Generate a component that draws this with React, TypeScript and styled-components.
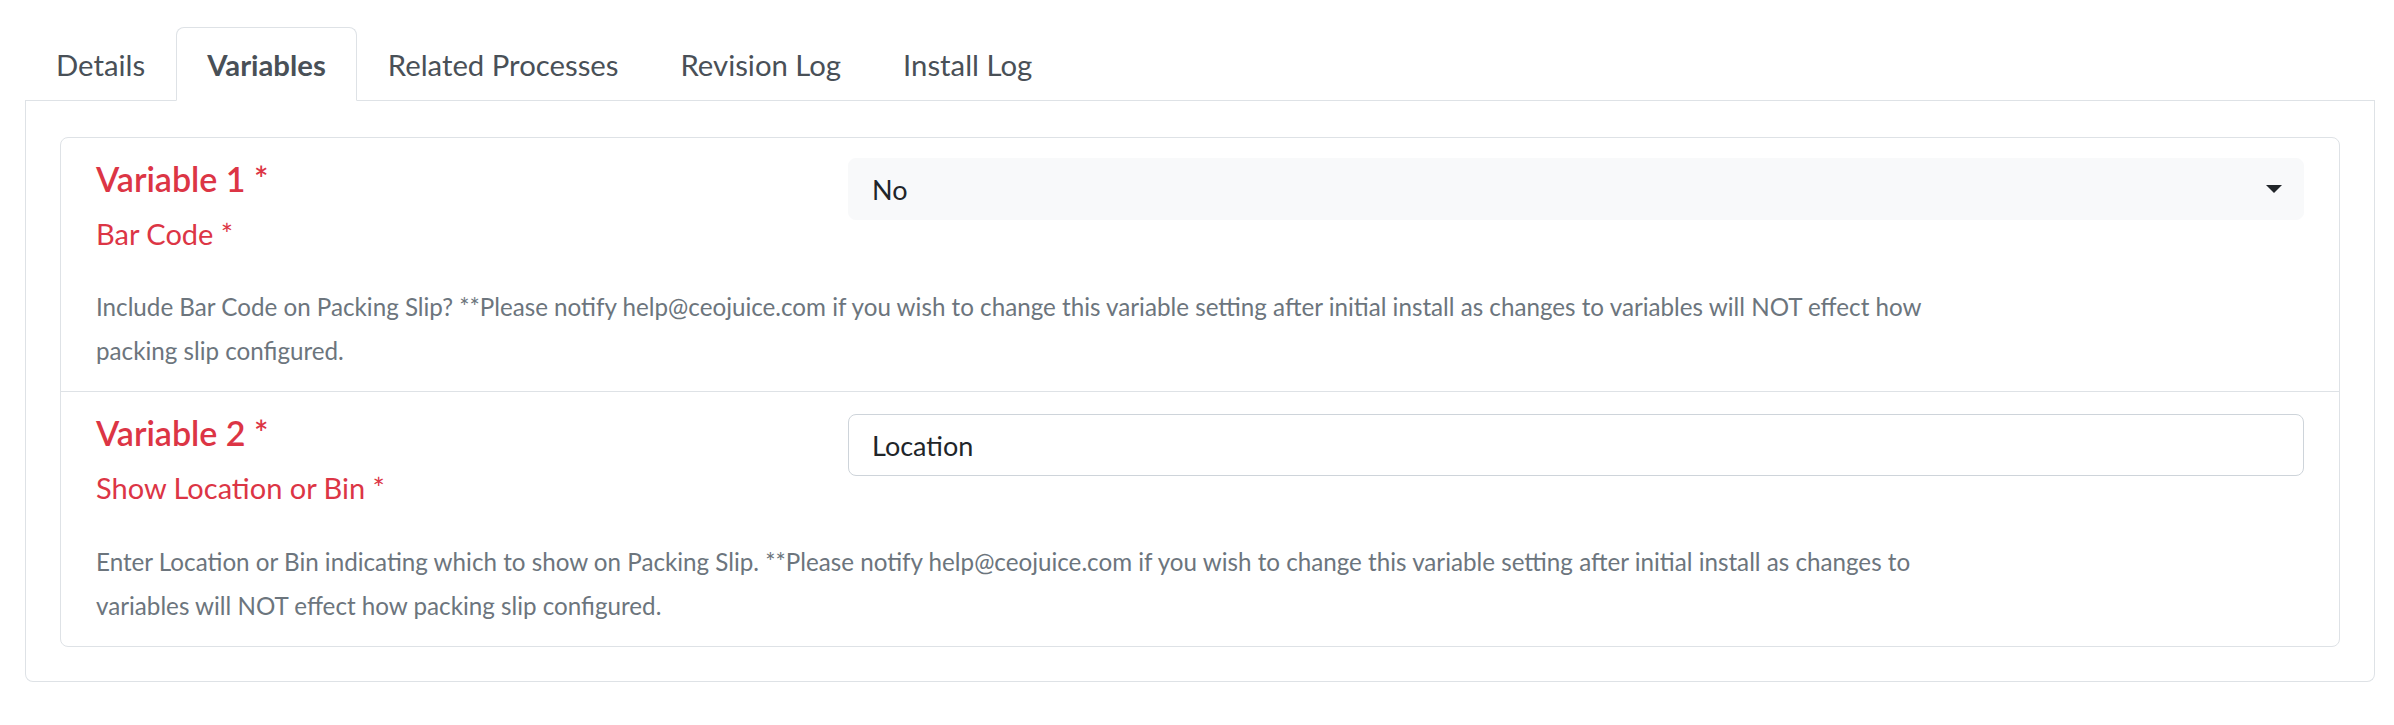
import React from 'react'
import styled, { createGlobalStyle } from 'styled-components'

const tabs = ['Details', 'Variables', 'Related Processes', 'Revision Log', 'Install Log']

const variables = [
  {
    title: 'Variable 1 *',
    label: 'Bar Code *',
    kind: 'select',
    value: 'No',
    help: 'Include Bar Code on Packing Slip? **Please notify help@ceojuice.com if you wish to change this variable setting after initial install as changes to variables will NOT effect how packing slip configured.',
  },
  {
    title: 'Variable 2 *',
    label: 'Show Location or Bin *',
    kind: 'input',
    value: 'Location',
    help: 'Enter Location or Bin indicating which to show on Packing Slip. **Please notify help@ceojuice.com if you wish to change this variable setting after initial install as changes to variables will NOT effect how packing slip configured.',
  },
]

export default function App() {
  return (
    <>
      <GlobalStyle />
      <Page>
        <Nav>
          {tabs.map((t) => (
            <Tab key={t} $active={t === 'Variables'}>
              {t}
            </Tab>
          ))}
        </Nav>
        <Panel>
          <Card>
            {variables.map((v) => (
              <Row key={v.title}>
                <FieldGrid>
                  <div>
                    <Title>{v.title}</Title>
                    <Label>{v.label}</Label>
                  </div>
                  {v.kind === 'select' ? (
                    <Select>
                      <span>{v.value}</span>
                      <Caret />
                    </Select>
                  ) : (
                    <Input>{v.value}</Input>
                  )}
                </FieldGrid>
                <Help>{v.help}</Help>
              </Row>
            ))}
          </Card>
        </Panel>
      </Page>
    </>
  )
}

const GlobalStyle = createGlobalStyle`
  body {
    margin: 0;
    background: #fff;
    font-family: 'Segoe UI', Lato, 'Noto Sans', sans-serif;
  }
`

const Page = styled.div`
  padding: 27px 19px 0 25px;
`

const Nav = styled.div`
  display: flex;
  border-bottom: 1px solid #dee2e6;
`

const Tab = styled.div<{ $active?: boolean }>`
  margin-bottom: -1px;
  padding: 14px 30px 13px;
  font-size: 29.3px;
  line-height: 45px;
  color: #495057;
  font-weight: ${(p) => (p.$active ? 700 : 400)};
  border: 1px solid ${(p) => (p.$active ? '#dee2e6' : 'transparent')};
  border-bottom-color: ${(p) => (p.$active ? '#fff' : 'transparent')};
  border-radius: 8px 8px 0 0;
  background: ${(p) => (p.$active ? '#fff' : 'transparent')};
`

const Panel = styled.div`
  border: 1px solid #dee2e6;
  border-top: none;
  border-radius: 0 0 8px 8px;
  padding: 36px 34px 34px;
`

const Card = styled.div`
  border: 1px solid #dee2e6;
  border-radius: 8px;
`

const Row = styled.div`
  padding: 21px 35px 18px;
  & + & {
    border-top: 1px solid #dee2e6;
  }
`

const FieldGrid = styled.div`
  display: grid;
  grid-template-columns: 1fr 2fr;
  column-gap: 24px;
  align-items: start;
`

const Title = styled.div`
  color: #dc3545;
  font-size: 34px;
  font-weight: 600;
  line-height: 1.2;
  margin-bottom: 12px;
`

const Label = styled.div`
  color: #dc3545;
  font-size: 29px;
  line-height: 1.5;
`

const Select = styled.div`
  display: flex;
  align-items: center;
  justify-content: space-between;
  height: 62px;
  margin-top: -1px;
  box-sizing: border-box;
  padding: 0 21px 0 23px;
  background: #f8f9fa;
  border: 1px solid #f8f9fa;
  border-radius: 8px;
  color: #212529;
  font-size: 27px;
`

const Caret = styled.span`
  width: 0;
  height: 0;
  border-left: 8px solid transparent;
  border-right: 8px solid transparent;
  border-top: 8px solid #212529;
`

const Input = styled.div`
  display: flex;
  align-items: center;
  height: 62px;
  margin-top: 1px;
  box-sizing: border-box;
  padding: 0 23px;
  border: 1px solid #ced4da;
  border-radius: 8px;
  color: #212529;
  font-size: 27px;
`

const Help = styled.p`
  margin: 30px 0 0;
  max-width: 1840px;
  color: #6c757d;
  font-size: 24.2px;
  line-height: 44px;
`
